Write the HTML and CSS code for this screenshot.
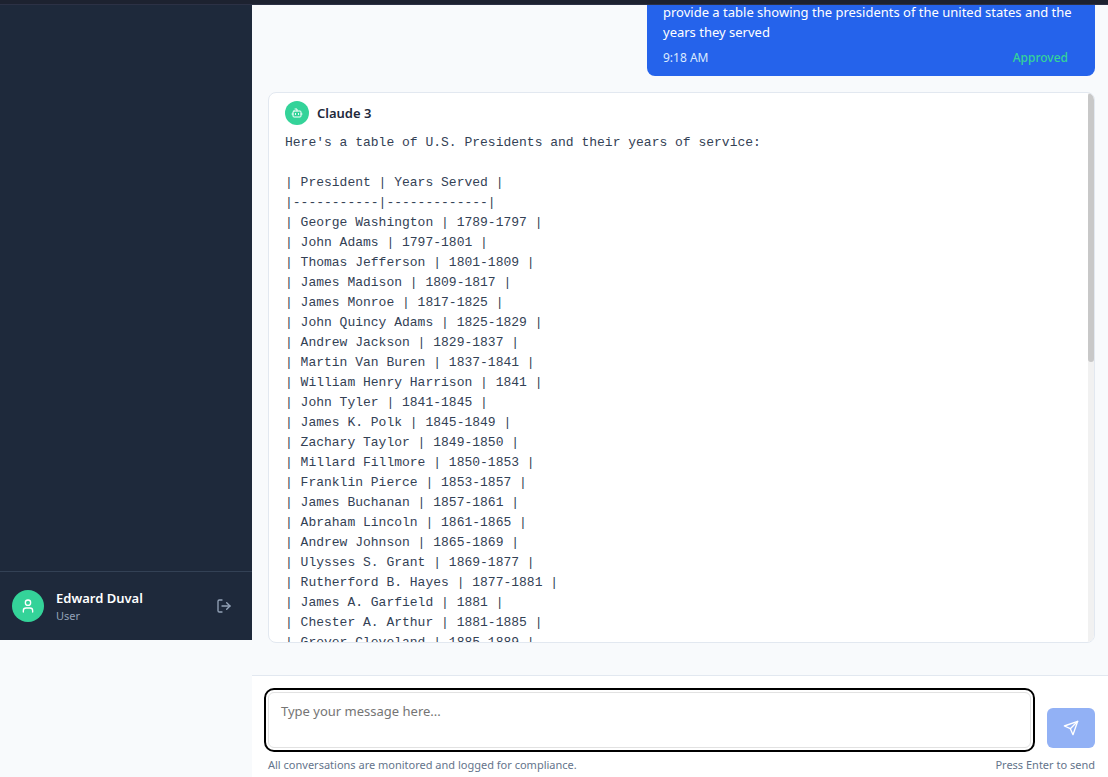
FILE: index.html
```html
<!DOCTYPE html>
<html lang="en">
<head>
<meta charset="utf-8">
<meta name="viewport" content="width=device-width, initial-scale=1">
<title>Chat</title>
<link rel="stylesheet" href="styles.css">
</head>
<body>
<header class="topbar"></header>
<div class="shell">
  <aside class="sidebar">
    <div class="account">
      <span class="avatar">
        <svg class="icon" width="16" height="16" viewBox="0 0 24 24" aria-hidden="true"><circle cx="12" cy="7" r="4"/><path d="M19 21v-2a4 4 0 0 0-4-4H9a4 4 0 0 0-4 4v2"/></svg>
      </span>
      <div class="who">
        <div class="name">Edward Duval</div>
        <div class="role">User</div>
      </div>
      <button class="logout" type="button" aria-label="Log out">
        <svg class="icon" width="16" height="16" viewBox="0 0 24 24" aria-hidden="true"><path d="M9 21H5a2 2 0 0 1-2-2V5a2 2 0 0 1 2-2h4"/><path d="m16 17 5-5-5-5"/><path d="M21 12H9"/></svg>
      </button>
    </div>
  </aside>
  <main class="chat">
    <section class="messages">
      <article class="prompt">
        <p class="prompt-text">provide a table showing the presidents of the united states and the years they served</p>
        <div class="prompt-meta"><time>9:18 AM</time><span class="status">Approved</span></div>
      </article>
      <article class="reply">
        <div class="reply-scroll">
          <header class="reply-head">
            <span class="bot">
              <svg class="icon" width="12" height="12" viewBox="0 0 24 24" aria-hidden="true"><path d="M12 8V4H8"/><rect width="16" height="12" x="4" y="8" rx="2"/><path d="M2 14h2"/><path d="M20 14h2"/><path d="M15 13v2"/><path d="M9 13v2"/></svg>
            </span>
            <h2 class="bot-name">Claude 3</h2>
          </header>
          <pre class="reply-text">Here's a table of U.S. Presidents and their years of service:

| President | Years Served |
|-----------|-------------|
| George Washington | 1789-1797 |
| John Adams | 1797-1801 |
| Thomas Jefferson | 1801-1809 |
| James Madison | 1809-1817 |
| James Monroe | 1817-1825 |
| John Quincy Adams | 1825-1829 |
| Andrew Jackson | 1829-1837 |
| Martin Van Buren | 1837-1841 |
| William Henry Harrison | 1841 |
| John Tyler | 1841-1845 |
| James K. Polk | 1845-1849 |
| Zachary Taylor | 1849-1850 |
| Millard Fillmore | 1850-1853 |
| Franklin Pierce | 1853-1857 |
| James Buchanan | 1857-1861 |
| Abraham Lincoln | 1861-1865 |
| Andrew Johnson | 1865-1869 |
| Ulysses S. Grant | 1869-1877 |
| Rutherford B. Hayes | 1877-1881 |
| James A. Garfield | 1881 |
| Chester A. Arthur | 1881-1885 |
| Grover Cleveland | 1885-1889 |</pre>
        </div>
        <div class="scrollbar" aria-hidden="true"><div class="thumb"></div></div>
      </article>
    </section>
    <form class="composer">
      <div class="entry">
        <textarea class="input" placeholder="Type your message here..." aria-label="Message"></textarea>
        <button class="send" type="button" aria-label="Send" disabled>
          <svg class="icon" width="16" height="16" viewBox="0 0 24 24" aria-hidden="true"><path d="m22 2-7 20-4-9-9-4Z"/><path d="M22 2 11 13"/></svg>
        </button>
      </div>
      <div class="notes"><span>All conversations are monitored and logged for compliance.</span><span>Press Enter to send</span></div>
    </form>
  </main>
</div>
</body>
</html>
```
FILE: styles.css
```css
* { box-sizing: border-box; }

body {
  margin: 0;
  height: 100vh;
  display: flex;
  flex-direction: column;
  overflow: hidden;
  background: #f8fafc;
  color: #1e293b;
  font: 13px/20px "Noto Sans", "Open Sans", sans-serif;
}

button { border: 0; padding: 0; background: none; }

.icon {
  display: block;
  fill: none;
  stroke: currentColor;
  stroke-width: 2;
  stroke-linecap: round;
  stroke-linejoin: round;
}

.topbar {
  flex: none;
  height: 5px;
  background: #1d2230;
  border-bottom: 1px solid #2c3145;
}

.shell { flex: 1; min-height: 0; display: flex; }

.sidebar {
  flex: none;
  width: 252px;
  height: calc(100vh - 142px);
  display: flex;
  flex-direction: column;
  justify-content: flex-end;
  background: #1e293b;
}

.account {
  display: flex;
  align-items: center;
  gap: 12px;
  padding: 16px 20px 16px 12px;
  border-top: 1px solid #334155;
}

.avatar, .bot {
  flex: none;
  display: grid;
  place-items: center;
  border-radius: 50%;
  background: #34d399;
  color: #fff;
}
.avatar { width: 32px; height: 32px; }
.bot { width: 24px; height: 24px; }

.who { flex: 1; }
.name { color: #fff; font-weight: 600; }
.role { color: #94a3b8; font-size: 11px; line-height: 16px; }
.logout { color: #94a3b8; }

.chat { flex: 1; min-width: 0; display: flex; flex-direction: column; }

.messages {
  flex: 1;
  min-height: 0;
  overflow: hidden;
  display: flex;
  flex-direction: column;
  justify-content: flex-end;
  gap: 16px;
  padding: 0 13px 32px 16px;
}

.prompt {
  flex: none;
  align-self: flex-end;
  max-width: 448px;
  padding: 10px 16px;
  border-radius: 8px;
  background: #2563eb;
  color: #fff;
}
.prompt-text { margin: 0; }
.prompt-meta {
  display: flex;
  justify-content: space-between;
  margin-top: 8px;
  color: #dbeafe;
  font-size: 12px;
  line-height: 16px;
}
.status { padding: 0 11px; color: #34d399; font-weight: 500; }

.reply {
  position: relative;
  flex: none;
  height: calc(100vh - 226px);
  overflow: hidden;
  border: 1px solid #e2e8f0;
  border-radius: 8px;
  background: #fff;
}
.reply-scroll {
  height: 100%;
  overflow-y: auto;
  scrollbar-width: none;
  padding: 8px 16px;
}
.scrollbar {
  position: absolute;
  top: 0;
  right: 0;
  bottom: 0;
  width: 6px;
  background: #f1f1f1;
}
.thumb { height: 49%; border-radius: 3px; background: #c8c8c8; }

.reply-head { display: flex; align-items: center; gap: 8px; margin-bottom: 8px; }
.bot-name { margin: 0; font-size: 13px; font-weight: 600; }
.reply-text {
  margin: 0;
  color: #334155;
  font: 13px/20px "Liberation Mono", monospace;
}

.composer {
  flex: none;
  padding: 16px 13px 4px 16px;
  border-top: 1px solid #e2e8f0;
  background: #fff;
}
.entry { display: flex; align-items: flex-end; gap: 16px; }
.input {
  flex: 1;
  min-width: 0;
  height: 56px;
  padding: 8px 12px;
  border: 1px solid #e2e2e2;
  border-radius: 6px;
  outline: 2px solid #000;
  outline-offset: 2px;
  resize: none;
  background: #fff;
  color: #1e293b;
  font: inherit;
}
.input::placeholder { color: #757575; }
.send {
  width: 48px;
  height: 40px;
  display: grid;
  place-items: center;
  border-radius: 6px;
  background: #92b1f5;
  color: #fff;
}
.notes {
  display: flex;
  justify-content: space-between;
  margin-top: 9px;
  color: #64748b;
  font-size: 11px;
  line-height: 16px;
}
```
